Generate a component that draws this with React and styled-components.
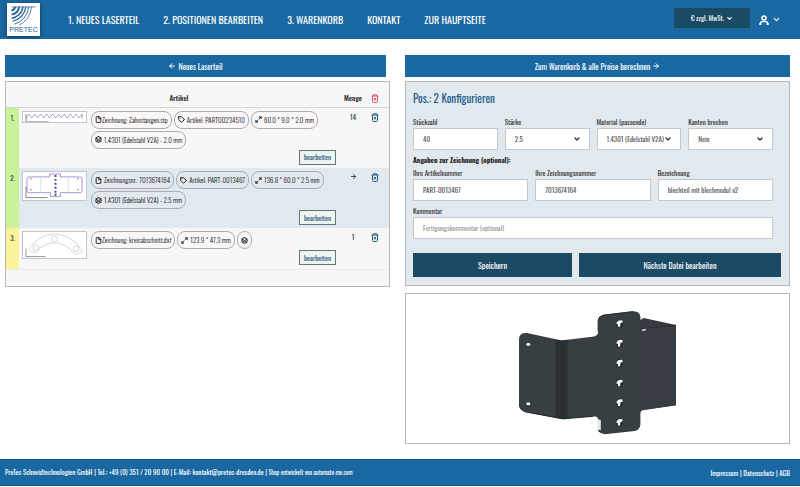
import React, { useState } from "react";
import styled, { createGlobalStyle } from "styled-components";
import {
  FiArrowLeft,
  FiArrowRight,
  FiChevronDown,
  FiFile,
  FiLayers,
  FiMaximize2,
  FiTag,
} from "react-icons/fi";

const colors = {
  blue: "#1968a2",
  dark: "#1b4a65",
  line: "#b3b8bb",
  panel: "#e1e8ee",
  light: "#f8f6f7",
};

const positions = [
  {
    id: 1,
    color: "#c9f29b",
    height: 61,
    drawing: "rack",
    menge: "14",
    chips: [
      { icon: FiFile, text: "Zeichnung: Zahnstangen.stp", tight: true },
      { icon: FiTag, text: "Artikel: PART00234510" },
      { icon: FiMaximize2, text: "60.0 * 9.0 * 2.0 mm" },
      { icon: FiLayers, text: "1.4301 (Edelstahl V2A) - 2.0 mm" },
    ],
  },
  {
    id: 2,
    color: "#c9f29b",
    height: 60,
    active: true,
    drawing: "plate",
    chips: [
      { icon: FiFile, text: "Zeichnungsnr.: 7013674164" },
      { icon: FiTag, text: "Artikel: PART-0013467" },
      { icon: FiMaximize2, text: "136.8 * 60.0 * 2.5 mm" },
      { icon: FiLayers, text: "1.4301 (Edelstahl V2A) - 2.5 mm" },
    ],
  },
  {
    id: 3,
    color: "#fbf39b",
    height: 41,
    drawing: "arc",
    menge: "1",
    chips: [
      { icon: FiFile, text: "Zeichnung: kreisabschnitt.dxf", tight: true },
      { icon: FiMaximize2, text: "123.9 * 47.3 mm" },
      { icon: FiLayers, text: "" },
    ],
  },
];

const Logo = () => (
  <LogoBox href="#" aria-label="PRETEC">
    <svg width="27" height="20" viewBox="0 0 27 21" fill="none" stroke="#2a6496">
      <path d="M1 5 Q4 4 5 1" strokeWidth="2.2" />
      <path d="M1 9 Q8 8 9 1" strokeWidth="2" />
      <path d="M1 13 Q11 11 13 1" strokeWidth="1.6" />
      <path d="M2 16 Q14 13 16 1" strokeWidth="1.3" />
      <path d="M4 19 Q17 15 19 1" strokeWidth="1" />
      <path d="M9 20 Q20 15 22 1" strokeWidth="0.8" />
      <path d="M1 1 H26" strokeWidth="0.8" />
    </svg>
    <LogoText>PRETEC</LogoText>
  </LogoBox>
);

const User = () => (
  <svg width="10" height="10" viewBox="0 0 20 20" fill="none" stroke="currentColor" strokeWidth="3">
    <circle cx="10" cy="6" r="4" />
    <path d="M2 20 V17 Q3 13 7 13 H13 Q17 13 18 17 V20 M1 18 H5 M15 18 H19" />
  </svg>
);

const Trash = ({ color = "#1d5c82" }) => (
  <svg width="8" height="9" viewBox="0 0 16 18" fill="none" stroke={color} strokeWidth="2">
    <path d="M1 4 H15 M5 4 V1.5 H11 V4 M3 4 V15 Q3 17 5 17 H11 Q13 17 13 15 V4 M6 8 L10 13 M10 8 L6 13" />
  </svg>
);

const Drawing = ({ type }) => {
  if (type === "rack") {
    return (
      <Thumb viewBox="0 0 64 11">
        <path
          d="M4 7 V4 L6 2 L9 6 L12 2 L15 6 L18 2 L21 6 L24 2 L27 6 L30 2 L33 6 L36 2 L39 6 L42 2 L45 6 L48 2 L51 6 L54 2 L57 6 L60 2 V7"
          stroke="#8878b8"
        />
        <path d="M3 2 V10 H26" stroke="#666" />
      </Thumb>
    );
  }
  if (type === "plate") {
    return (
      <Thumb viewBox="0 0 64 28">
        <path
          d="M6 5 H27 V2 H38 V5 H58 Q60 5 60 7 V19 Q60 21 58 21 H38 V25 H28 V21 H6 Q4 21 4 19 V7 Q4 5 6 5 Z"
          stroke="#8068bd"
        />
        <path d="M18 6 V20 M46 6 V20" stroke="#b9dede" />
        <path d="M32 4 h2 M32 8 h2 M32 12 h2 M32 16 h2 M32 20 h2 M32 23 h2" stroke="#5b3dab" strokeWidth="2" />
        <path d="M7 7 h2 M55 7 h2 M7 18 h2 M55 18 h2" stroke="#5b3dab" />
        <path d="M3 15 V26 H25" stroke="#555" />
      </Thumb>
    );
  }
  return (
    <Thumb viewBox="0 0 64 26">
      <path
        d="M6 17 Q17 2 32 2 Q48 2 60 18 L59 21 L53 23 Q44 11 32 11 Q21 11 13 21 L8 20 Z"
        stroke="#c4c4c4"
      />
      <circle cx="32" cy="7" r="3" stroke="#c4c4c4" />
      <circle cx="13" cy="16" r="3" stroke="#c4c4c4" />
      <circle cx="54" cy="17" r="3" stroke="#c4c4c4" />
      <path d="M3 17 V25 H23" stroke="#666" />
    </Thumb>
  );
};

const Bracket = () => (
  <svg width="158" height="125" viewBox="80 60 475 375" role="img" aria-label="Blechteil">
    <path d="M440 92 L455 84 L552 105 V346 L440 362 Z" fill="#353b40" />
    <path d="M446 116 L552 105 V346 L446 362 Z" fill="#373d42" />
    <path d="M444 116 L552 105" stroke="#23282c" strokeWidth="2" />
    <path d="M449 119 L463 116 L459 121 L450 122 Z" fill="#fff" />
    <path
      d="M80 146 Q82 127 104 129 L208 151 L306 139 Q318 136 318 124 V90 Q320 78 334 75 L424 64 Q443 63 445 80 V350 Q446 358 458 358 Q446 361 445 370 V404 Q443 421 428 423 L338 433 Q326 432 318 424 V388 Q317 379 304 379 L212 387 L100 366 Q80 360 80 340 Z"
      fill="#383f43"
    />
    <path d="M190 148 L208 151 L226 149 V386 L212 387 L190 383 Z" fill="#2a3034" />
    <path d="M80 340 Q80 360 100 366 L212 387 L304 379" fill="none" stroke="#20262a" strokeWidth="3" />
    <path d="M318 124 V90 Q320 78 334 75 L424 64" fill="none" stroke="#20262a" strokeWidth="3" />
    <path d="M316 388 L326 390 V421 L316 418 Z" fill="#e4e9ec" />
    <ellipse cx="108" cy="163" rx="6" ry="4" fill="#fff" />
    <ellipse cx="108" cy="342" rx="6" ry="4" fill="#fff" />
    {[101, 160, 220, 280, 339, 398].map((y) => (
      <g key={y}>
        <ellipse cx="382" cy={y} rx="10" ry="12" fill="#202528" />
        <path
          d={`M374 ${y - 5} Q379 ${y - 13} 391 ${y - 10} L391 ${y - 3} L385 ${y - 2} L384 ${y + 9} L377 ${y + 9} L378 ${y + 2} L373 ${y + 1} Z`}
          fill="#fff"
        />
      </g>
    ))}
  </svg>
);

const Field = ({ id, label, ...rest }) => (
  <FieldBox>
    <Label htmlFor={id}>{label}</Label>
    <Input id={id} {...rest} />
  </FieldBox>
);

const SelectField = ({ id, label, options }) => (
  <FieldBox>
    <Label htmlFor={id}>{label}</Label>
    <SelectWrap>
      <Select id={id}>
        {options.map((option) => (
          <option key={option}>{option}</option>
        ))}
      </Select>
      <FiChevronDown size={8} strokeWidth={4} />
    </SelectWrap>
  </FieldBox>
);

const App = () => {
  const [rows, setRows] = useState(positions);
  const remove = (id) => setRows(rows.filter((row) => row.id !== id));

  return (
    <>
      <GlobalStyle />
      <Header>
        <Logo />
        <Nav>
          <NavLink href="#laserteil">1. NEUES LASERTEIL</NavLink>
          <NavLink href="#positionen">2. POSITIONEN BEARBEITEN</NavLink>
          <NavLink href="#warenkorb">3. WARENKORB</NavLink>
          <NavLink href="#kontakt">KONTAKT</NavLink>
          <NavLink href="#hauptseite">ZUR HAUPTSEITE</NavLink>
        </Nav>
        <TaxButton>
          € zzgl. MwSt. <FiChevronDown size={7} strokeWidth={4} />
        </TaxButton>
        <UserButton aria-label="Benutzerkonto">
          <User />
          <FiChevronDown size={9} strokeWidth={3} />
        </UserButton>
      </Header>

      <Main>
        <Column>
          <BarButton $short>
            <FiArrowLeft size={8} strokeWidth={3} /> Neues Laserteil
          </BarButton>
          <ListPanel>
            <Table>
              <colgroup>
                <col width="13" />
                <col />
                <col width="28" />
                <col width="22" />
              </colgroup>
              <thead>
                <tr>
                  <HeadCell />
                  <HeadCell>Artikel</HeadCell>
                  <HeadCell>Menge</HeadCell>
                  <HeadCell $last>
                    <IconButton aria-label="Alle löschen" onClick={() => setRows([])}>
                      <Trash color="#dc5468" />
                    </IconButton>
                  </HeadCell>
                </tr>
              </thead>
              <tbody>
                {rows.map((row) => (
                  <Row key={row.id} $active={row.active} $height={row.height}>
                    <NumberCell $color={row.color}>{row.id}.</NumberCell>
                    <Cell>
                      <Article>
                        <Drawing type={row.drawing} />
                        <Details>
                          <Chips>
                            {row.chips.map(({ icon: Icon, text, tight }) => (
                              <Chip key={text} $tight={tight}>
                                <Icon size={7} strokeWidth={3} />
                                {text && <span>{text}</span>}
                              </Chip>
                            ))}
                          </Chips>
                          <EditButton>bearbeiten</EditButton>
                        </Details>
                      </Article>
                    </Cell>
                    <ValueCell>{row.menge || <FiArrowRight size={7} strokeWidth={3} />}</ValueCell>
                    <ValueCell $last>
                      <IconButton aria-label="Position löschen" onClick={() => remove(row.id)}>
                        <Trash />
                      </IconButton>
                    </ValueCell>
                  </Row>
                ))}
              </tbody>
            </Table>
          </ListPanel>
        </Column>

        <Column>
          <BarButton>
            Zum Warenkorb &amp; alle Preise berechnen <FiArrowRight size={8} strokeWidth={3} />
          </BarButton>
          <FormPanel onSubmit={(e) => e.preventDefault()}>
            <Title>Pos.: 2 Konfigurieren</Title>
            <Fields $columns={4}>
              <Field id="stueckzahl" label="Stückzahl" defaultValue="40" />
              <SelectField id="staerke" label="Stärke" options={["2.5"]} />
              <SelectField id="material" label="Material (passende)" options={["1.4301 (Edelstahl V2A)"]} />
              <SelectField id="kanten" label="Kanten brechen" options={["Nein", "Ja"]} />
            </Fields>
            <SubTitle>Angaben zur Zeichnung (optional):</SubTitle>
            <Fields $columns={3}>
              <Field id="artikelnummer" label="Ihre Artikelnummer" defaultValue="PART-0013467" />
              <Field id="zeichnungsnummer" label="Ihre Zeichnungsnummer" defaultValue="7013674164" />
              <Field id="bezeichnung" label="Bezeichnung" defaultValue="blechteil mit blechmodul v2" />
            </Fields>
            <Fields $columns={1}>
              <Field id="kommentar" label="Kommentar" placeholder="Fertigungskommentar (optional)" />
            </Fields>
            <Actions>
              <ActionButton type="submit">Speichern</ActionButton>
              <ActionButton type="button">Nächste Datei bearbeiten</ActionButton>
            </Actions>
          </FormPanel>
          <Preview>
            <Bracket />
          </Preview>
        </Column>
      </Main>

      <Footer>
        <span>
          PreTec Schneidtechnologien GmbH | Tel.: +49 (0) 351 / 20 90 00 | E-Mail:{" "}
          <a href="mailto:kontakt@pretec-dresden.de">kontakt@pretec-dresden.de</a> |{" "}
          <small>
            Shop entwickelt von <a href="#shop">automate-me.com</a>
          </small>
        </span>
        <span>
          <a href="#impressum">Impressum</a> | <a href="#datenschutz">Datenschutz</a> | <a href="#agb">AGB</a>
        </span>
      </Footer>
    </>
  );
};

export default App;

const GlobalStyle = createGlobalStyle`
  * {
    box-sizing: border-box;
  }
  body {
    margin: 0;
    background: #fff;
    color: #333;
    font-size: 7px;
    line-height: 10px;
  }
  body, button, input, select {
    font-family: Oswald, "Roboto Condensed", "Liberation Sans Narrow", "Liberation Sans", sans-serif;
  }
  button {
    cursor: pointer;
  }
  svg {
    flex-shrink: 0;
  }
`
const Header = styled.header`
  display: flex;
  align-items: center;
  height: 39px;
  padding: 0 19px 0 7px;
  background: ${colors.blue};
  color: #fff;
`
const LogoBox = styled.a`
  display: flex;
  flex-direction: column;
  align-items: center;
  width: 33px;
  height: 33px;
  margin-right: 28px;
  padding-top: 3px;
  background: #fff;
  box-shadow: 0 1px 4px rgba(0,0,0,0.5);
  text-decoration: none;
`
const LogoText = styled.span`
  font: 7px/8px "Liberation Sans", sans-serif;
  color: #1d5c92;
`
const Nav = styled.nav`
  display: flex;
  flex: 1;
  gap: 24px;
`
const NavLink = styled.a`
  color: #fff;
  font-size: 10px;
  font-weight: 400;
  line-height: 14px;
  text-decoration: none;
  white-space: nowrap;
`
const TaxButton = styled.button`
  display: flex;
  align-items: center;
  justify-content: center;
  gap: 2px;
  width: 76px;
  height: 20px;
  margin: 0 9px 3px 0;
  padding: 0;
  border: 0;
  background: ${colors.dark};
  color: #fff;
  font-size: 7px;
  font-weight: 400;
`
const UserButton = styled.button`
  display: flex;
  align-items: center;
  gap: 3px;
  padding: 0;
  border: 0;
  background: none;
  color: #fff;
`
const Main = styled.main`
  display: grid;
  grid-template-columns: 1fr 1fr;
  align-items: start;
  gap: 15px;
  padding: 16px 10px 15px 5px;
`
const Column = styled.section`
  display: flex;
  flex-direction: column;
  min-width: 0;
`
const BarButton = styled.button`
  display: flex;
  align-items: center;
  justify-content: center;
  gap: 2px;
  height: 22px;
  margin: 0 ${props => props.$short ? "4px" : "0"} 4px 0;
  border: 0;
  background: ${colors.blue};
  color: #fff;
  font-size: 8px;
  font-weight: 400;
`
const ListPanel = styled.div`
  padding-bottom: 16px;
  border: 1px solid ${colors.line};
  background: ${colors.light};
`
const Table = styled.table`
  width: 100%;
  table-layout: fixed;
  border-collapse: collapse;
  border-bottom: 1px solid #ebe9e9;
`
const HeadCell = styled.th`
  height: 25px;
  padding: 7px ${props => props.$last ? "6px" : "0"} 0 0;
  border-bottom: 1px solid #d3d8dc;
  font-size: 7px;
  font-weight: 600;
`
const Row = styled.tr`
  height: ${props => props.$height}px;
  background: ${props => props.$active ? colors.panel : "transparent"};
`
const NumberCell = styled.td`
  padding: 5px 0 0;
  background: ${props => props.$color};
  text-align: center;
  vertical-align: top;
`
const Cell = styled.td`
  padding: 3px 3px 2px;
  vertical-align: top;
`
const ValueCell = styled.td`
  padding: 4px ${props => props.$last ? "6px" : "0"} 0 0;
  text-align: center;
  vertical-align: top;
`
const Article = styled.div`
  display: flex;
  align-items: flex-start;
  gap: 4px;
`
const Thumb = styled.svg`
  width: 65px;
  border: 1px solid #c3c6ca;
  background: #fff;
  fill: none;
  stroke-width: 0.7px;
`
const Details = styled.div`
  display: flex;
  flex: 1;
  flex-direction: column;
  gap: 1px;
`
const Chips = styled.div`
  display: flex;
  flex-wrap: wrap;
  gap: 2px;
`
const Chip = styled.div`
  display: flex;
  align-items: center;
  gap: ${props => props.$tight ? "0" : "2px"};
  height: 18px;
  padding: 0 3px;
  border: 1px solid #a9adb1;
  border-radius: 8px;
  color: #111;
  font-size: 7px;
  font-weight: 300;
  white-space: nowrap;
`
const EditButton = styled.button`
  align-self: flex-end;
  width: 37px;
  height: 15px;
  padding: 0;
  border: 1px solid #5f7a74;
  background: #eef4f1;
  color: #2b5673;
  font-size: 7px;
  font-weight: 400;
  line-height: 10px;
`
const IconButton = styled.button`
  display: block;
  margin: 0 auto;
  padding: 0;
  border: 0;
  background: none;
  line-height: 8px;
`
const FormPanel = styled.form`
  padding: 8px 8px 8px 7px;
  border: 1px solid ${colors.line};
  background: ${colors.panel};
`
const Title = styled.h2`
  margin: 0 0 10px;
  color: #1d5c8a;
  font-size: 11px;
  font-weight: 400;
  line-height: 16px;
`
const Fields = styled.div`
  display: grid;
  grid-template-columns: repeat(${props => props.$columns}, minmax(0, 1fr));
  gap: 7px;
  margin: 0 8px 4px 0;
`
const FieldBox = styled.div`
  display: flex;
  flex-direction: column;
`
const Label = styled.label`
  line-height: 12px;
`
const Input = styled.input`
  width: 100%;
  height: 22px;
  padding: 0 9px;
  border: 1px solid #c3c9cf;
  background: #fff;
  color: #555;
  font-size: 7px;
  &::placeholder {
    color: #999;
  }
`
const SelectWrap = styled.div`
  display: grid;
  align-items: center;
  > * {
    grid-area: 1 / 1;
  }
  svg {
    justify-self: end;
    margin-right: 9px;
    pointer-events: none;
  }
`
const Select = styled(Input).attrs({ as: "select" })`
  appearance: none;
`
const SubTitle = styled.h3`
  margin: 0;
  color: #222;
  font-size: 7px;
  font-weight: 700;
  line-height: 13px;
`
const Actions = styled.div`
  display: grid;
  grid-template-columns: 159fr 202fr;
  gap: 7px;
  margin-top: 14px;
`
const ActionButton = styled.button`
  height: 24px;
  border: 0;
  background: ${colors.dark};
  color: #fff;
  font-size: 8px;
  font-weight: 400;
`
const Preview = styled.div`
  display: flex;
  justify-content: center;
  margin-top: 7px;
  padding: 16px 0 8px;
  border: 1px solid ${colors.line};
`
const Footer = styled.footer`
  display: flex;
  align-items: center;
  justify-content: space-between;
  height: 27px;
  padding: 0 10px 0 5px;
  border-top: 1px solid #155685;
  border-bottom: 1px solid #155685;
  background: ${colors.blue};
  color: #fff;
  font-size: 7px;
  font-weight: 400;
  a {
    color: #fff;
    text-decoration: none;
  }
  small {
    font-size: 6px;
  }
`
